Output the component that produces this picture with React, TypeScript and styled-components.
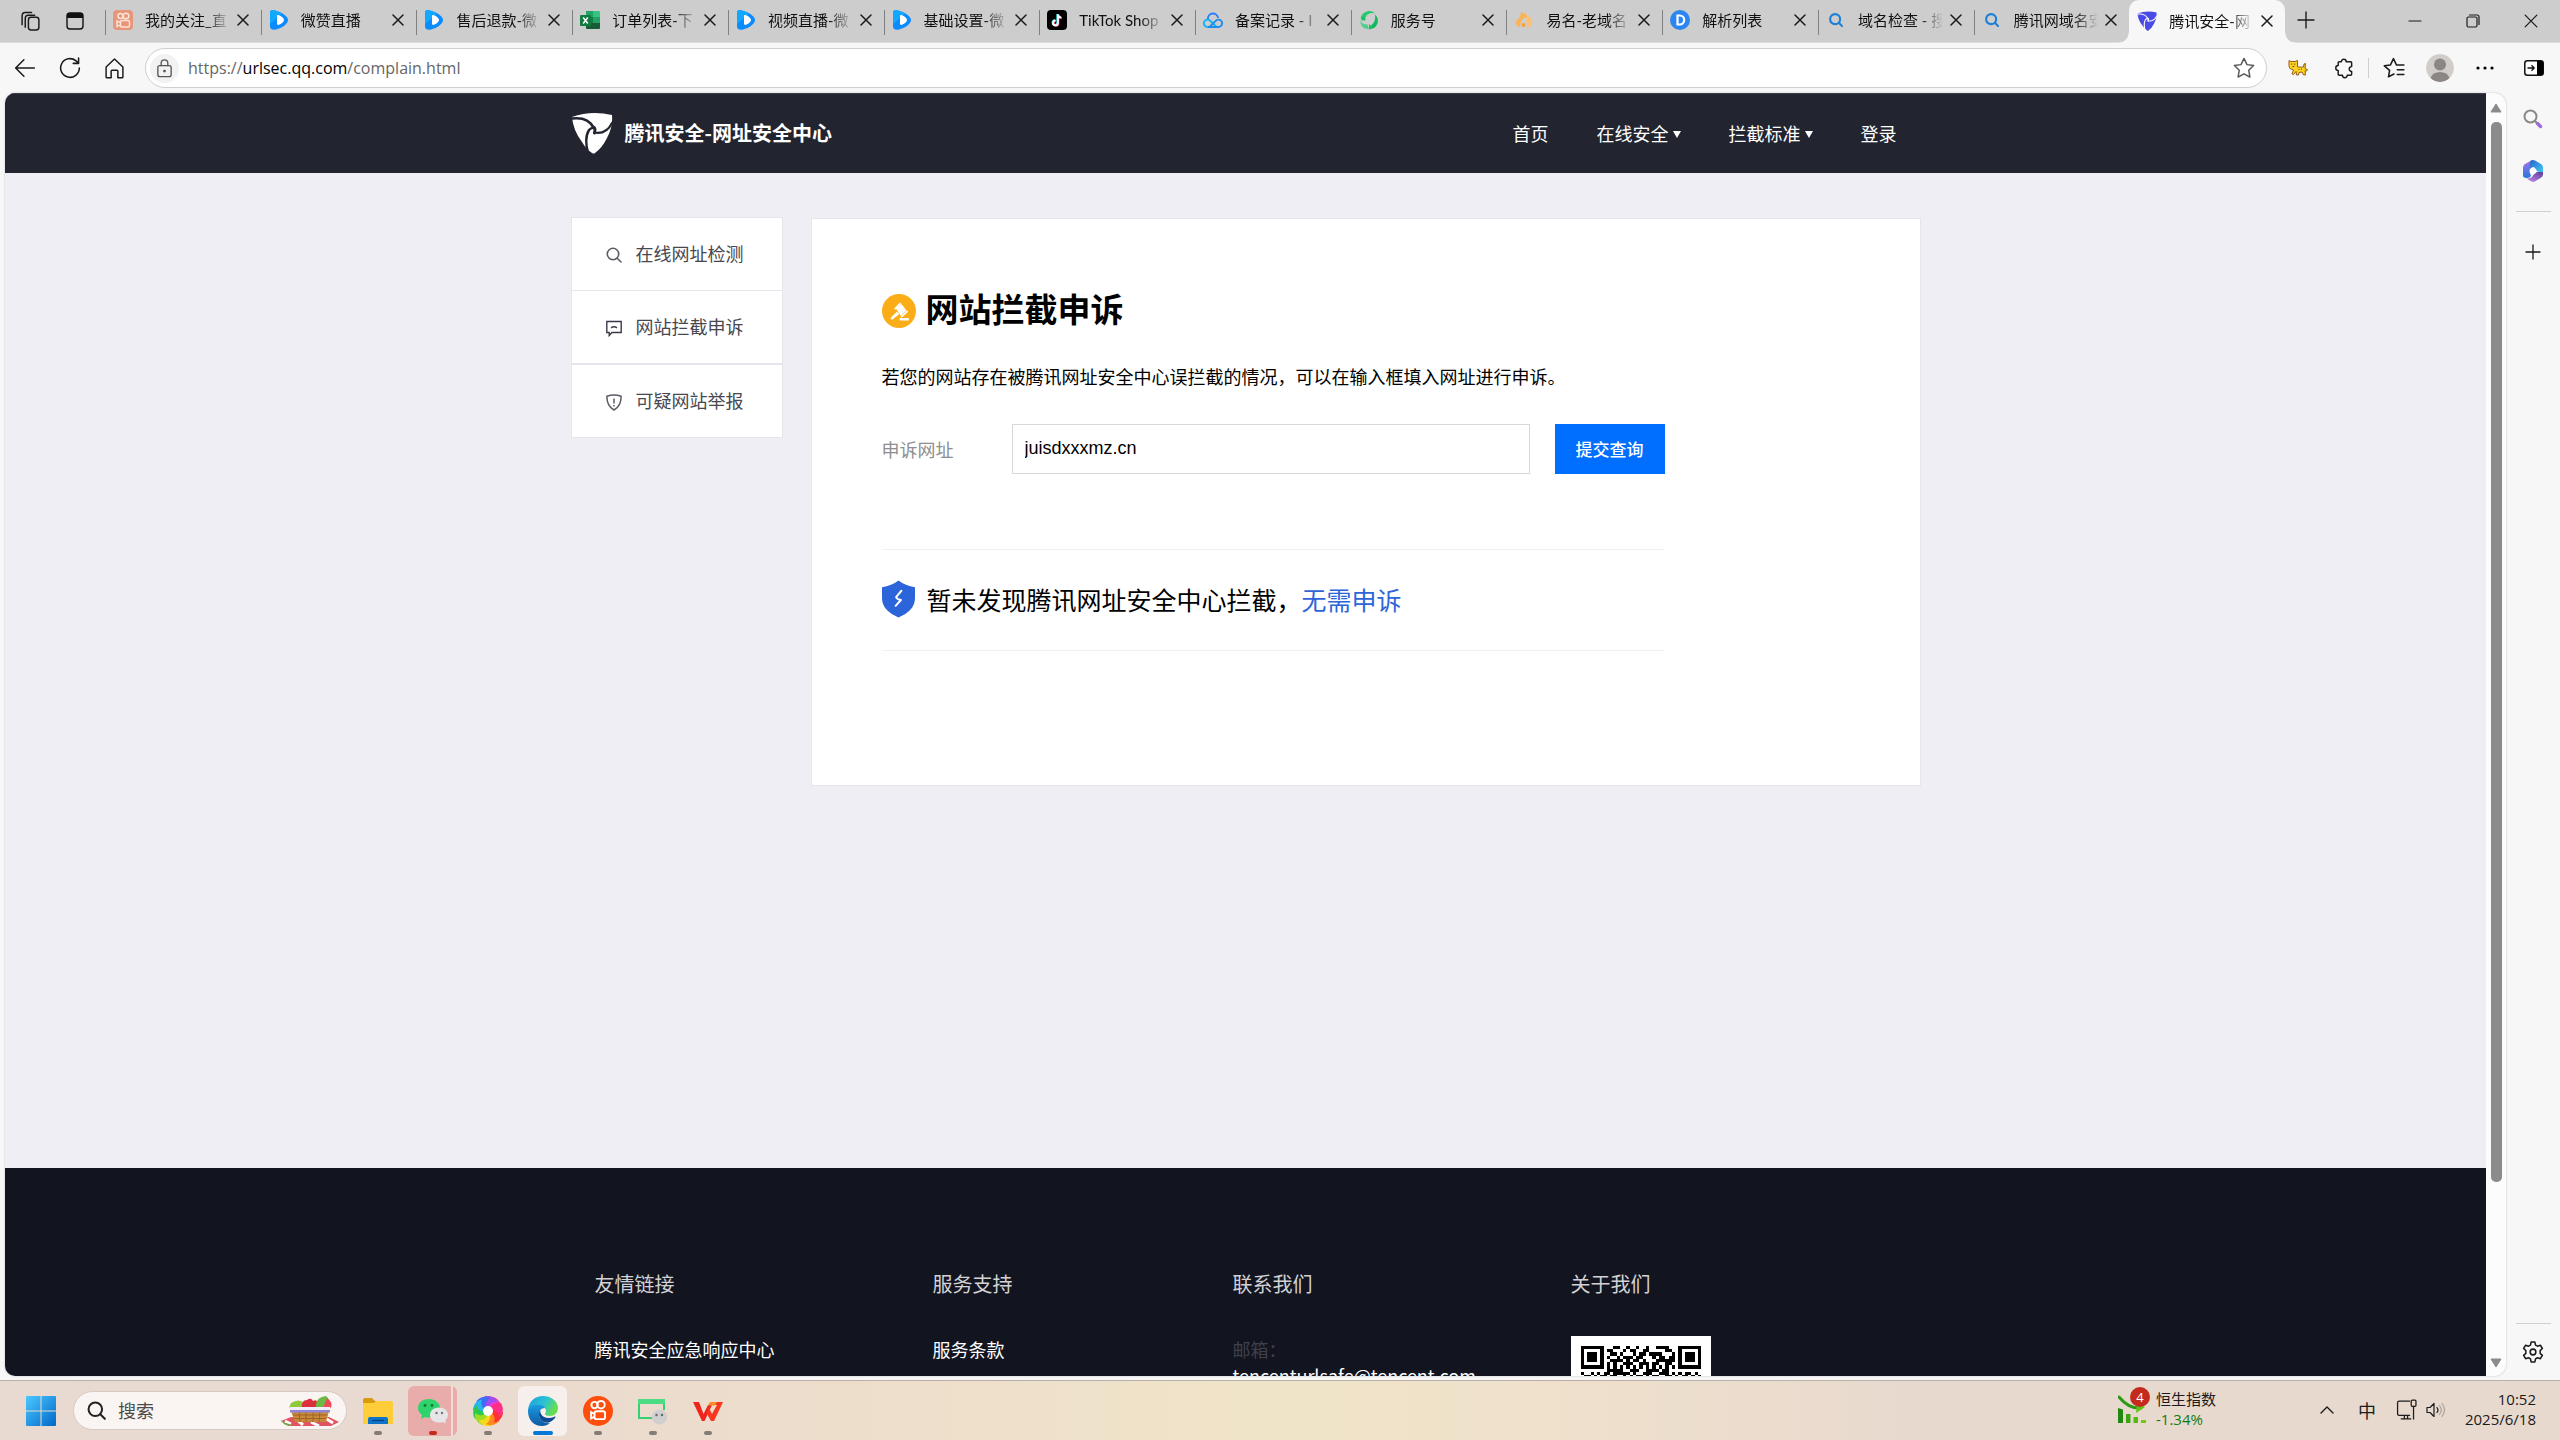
import React from 'react';
import styled, { createGlobalStyle } from 'styled-components';

const UI = '"Open Sans", "Noto Sans CJK SC", sans-serif';
const WEB = '"Noto Sans CJK SC", "Noto Sans", sans-serif';

const Global = createGlobalStyle`
  * { box-sizing: border-box; }
  html, body, #root { height: 100%; }
  body { margin: 0; background: #f7f7f7; font-family: ${UI}; color: #1b1b1b; overflow: hidden; }
  button, input { font: inherit; color: inherit; }
  button { border: 0; padding: 0; background: none; display: grid; place-items: center; cursor: pointer; }
  a { color: inherit; text-decoration: none; }
  svg { display: block; flex: none; }
  h1, h2, p, ul { margin: 0; padding: 0; font-weight: inherit; font-size: inherit; }
  ul { list-style: none; }
`;

const Screen = styled.div`
  height: 100vh;
  display: flex;
  flex-direction: column;
`;

/* ---------- tab strip ---------- */

const TabStrip = styled.div`
  display: flex;
  height: 43px;
  flex: none;
  background: #cdcdcd;
  border-bottom: 1px solid #dedede;
`;

const StripTools = styled.div`
  display: flex;
  align-items: center;
  width: 105px;
  padding-left: 20px;
  gap: 24px;
  flex: none;
`;

const Tabs = styled.div`
  display: flex;
  flex: 1;
  min-width: 0;
`;

const Tab = styled.div<{ $active?: boolean }>`
  position: relative;
  flex: 1 1 0;
  min-width: 0;
  height: ${(p) => (p.$active ? 43 : 42)}px;
  display: flex;
  align-items: center;
  padding: 0 8px 2px;
  border-radius: ${(p) => (p.$active ? '10px 10px 0 0' : '0')};
  background: ${(p) =>
    p.$active ? '#f7f7f7' : 'linear-gradient(#808080, #808080) 0 60% / 1px 25px no-repeat'};

  &::before,
  &::after {
    content: '';
    display: ${(p) => (p.$active ? 'block' : 'none')};
    position: absolute;
    bottom: 0;
    width: 10px;
    height: 10px;
  }
  &::before {
    right: 100%;
    background: radial-gradient(circle at 0 0, transparent 9px, #f7f7f7 10px);
  }
  &::after {
    left: 100%;
    background: radial-gradient(circle at 100% 0, transparent 9px, #f7f7f7 10px);
  }
`;

const IconSlot = styled.span`
  display: grid;
  place-items: center;
  width: 20px;
  flex: none;
`;

const TabTitle = styled.button`
  flex: 1;
  min-width: 0;
  display: block;
  margin: 0 3px 0 12px;
  overflow: hidden;
  white-space: nowrap;
  text-align: left;
  font-family: Lato, "Noto Sans CJK SC", sans-serif;
  font-size: 15px;
  line-height: 24px;
  color: #111;
  mask-image: linear-gradient(90deg, #000 calc(100% - 24px), transparent);
`;

const TabClose = styled.button`
  width: 20px;
  height: 20px;
`;

const StripEnd = styled.div`
  display: flex;
  width: 275px;
  flex: none;
  justify-content: space-between;
`;

const StripButton = styled.button`
  width: 42px;
  height: 40px;
`;

const WindowControls = styled.div`
  display: flex;
`;

const WindowButton = styled.button`
  width: 58px;
  height: 42px;
`;

/* ---------- toolbar ---------- */

const Toolbar = styled.div`
  display: flex;
  align-items: center;
  height: 50px;
  flex: none;
  padding-left: 2px;
  background: #f7f7f7;
`;

const ToolButton = styled.button<{ $w?: number }>`
  width: ${(p) => p.$w ?? 45}px;
  height: 40px;
  flex: none;
`;

const Address = styled.label`
  display: flex;
  align-items: center;
  flex: 1;
  height: 40px;
  margin: 0 8px;
  padding: 0 11px 0 4px;
  gap: 9px;
  border: 1px solid #cfcfcf;
  border-radius: 20px;
  background: #fff;
`;

const SiteInfo = styled.button`
  width: 29px;
  height: 29px;
  border-radius: 50%;
  background: #f2f2f2;
`;

const Url = styled.span`
  flex: 1;
  font-size: 16px;
  line-height: 24px;
  color: #666;
  b { font-weight: 400; color: #000; }
`;

const ToolDivider = styled.span`
  width: 1px;
  height: 20px;
  background: #cfcfcf;
`;

const Avatar = styled.button`
  width: 28px;
  height: 28px;
  flex: none;
  margin: 0 8px 0 7px;
  border-radius: 50%;
  overflow: hidden;
`;

/* ---------- browser body ---------- */

const Body = styled.div`
  display: flex;
  flex: 1;
  min-height: 0;
  padding: 0 0 4px 5px;
`;

const Frame = styled.div`
  display: flex;
  flex: 1;
  min-width: 0;
  border-radius: 10px 12px 12px 10px;
  overflow: hidden;
  background: #fcfcfc;
  box-shadow: 0 0 2px #bbb;
`;

const Page = styled.div`
  display: flex;
  flex-direction: column;
  flex: 1;
  min-width: 0;
  overflow: hidden;
  background: #efeef4;
  font-family: ${WEB};
`;

const ScrollTrack = styled.div`
  display: flex;
  flex-direction: column;
  align-items: center;
  width: 20px;
  padding: 10px 0 8px;
  gap: 9px;
  flex: none;
`;

const ScrollArea = styled.div`
  display: flex;
  flex-direction: column;
  flex: 1;
  width: 11px;
`;

const ScrollThumb = styled.div`
  flex: 19;
  border-radius: 5px;
  background: #8b8b8b;
`;

const ScrollRest = styled.div`
  flex: 3;
`;

const EdgeRail = styled.nav`
  display: flex;
  flex-direction: column;
  align-items: center;
  width: 54px;
  flex: none;
`;

const RailButton = styled.button<{ $h?: number }>`
  width: 44px;
  height: ${(p) => p.$h ?? 52}px;
`;

const RailLine = styled.span<{ $bottom?: boolean }>`
  width: 35px;
  height: 1px;
  background: #cfcfcf;
  margin-top: ${(p) => (p.$bottom ? 'auto' : '14px')};
  margin-bottom: ${(p) => (p.$bottom ? '4px' : '14px')};
`;

/* ---------- web page ---------- */

const Wrap = styled.div`
  width: 100%;
  max-width: 1350px;
  margin: 0 auto;
  display: flex;
`;

const SiteHeader = styled.header`
  display: flex;
  height: 80px;
  flex: none;
  padding-bottom: 2px;
  background: #222430;
  color: #fff;
  border-top: 1px solid #3d3f49;
  ${Wrap} { align-items: center; justify-content: space-between; }
`;

const Brand = styled.a`
  display: flex;
  align-items: center;
  gap: 12px;
  font-size: 20px;
  line-height: 28px;
  font-weight: 700;
`;

const SiteNav = styled.nav`
  display: flex;
  gap: 48px;
  padding-right: 24px;
  font-size: 18px;
  line-height: 26px;
`;

const NavLink = styled.a`
  display: flex;
  align-items: center;
  gap: 4px;
  svg { margin-top: 4px; }
`;

const Main = styled.main`
  flex: 1 0 auto;
  padding-top: 44px;
  ${Wrap} { align-items: flex-start; gap: 28px; }
`;

const SideMenu = styled.ul`
  width: 212px;
  flex: none;
  border: 1px solid #e5e5eb;
  background: #fff;
  li + li { border-top: 1px solid #e5e5eb; }
  li:last-child { border-top-width: 2px; }
`;

const SideLink = styled.a`
  display: flex;
  align-items: center;
  height: 72px;
  padding: 2px 0 0 34px;
  gap: 14px;
  font-size: 18px;
  line-height: 26px;
  color: #474750;
  span { padding-bottom: 4px; }
`;

const Card = styled.section`
  flex: 1;
  min-height: 568px;
  margin-top: 1px;
  padding: 68px 70px;
  border: 1px solid #e5e5eb;
  background: #fff;
  color: #000;
`;

const Title = styled.h1`
  display: flex;
  align-items: center;
  gap: 10px;
  font-size: 33px;
  line-height: 42px;
  font-weight: 700;
  span { padding-bottom: 6px; }
`;

const Lead = styled.p`
  margin-top: 28px;
  font-size: 18px;
  line-height: 26px;
  white-space: nowrap;
`;

const Form = styled.form`
  display: flex;
  align-items: center;
  margin-top: 35px;
`;

const FormLabel = styled.label`
  width: 130px;
  font-size: 18px;
  line-height: 26px;
  color: #8e8e8e;
`;

const TextBox = styled.input`
  width: 518px;
  height: 50px;
  padding: 0 12px 2px;
  border: 1px solid #d7d7dc;
  background: #fff;
  font-family: "Liberation Sans", Arial, sans-serif;
  font-size: 18px;
  color: #000;
`;

const Submit = styled.button`
  width: 110px;
  height: 50px;
  margin-left: 25px;
  padding-bottom: 2px;
  background: #006eff;
  color: #fff;
  font-size: 17px;
  font-weight: 500;
`;

const Result = styled.div`
  display: flex;
  align-items: center;
  gap: 12px;
  width: 782px;
  height: 102px;
  margin-top: 75px;
  padding-bottom: 3px;
  border: solid #f1f1f3;
  border-width: 1px 0;
  font-size: 25px;
  line-height: 36px;
  a { color: #2d64d8; }
`;

const SiteFooter = styled.footer`
  height: 208px;
  flex: none;
  padding-top: 101px;
  overflow: hidden;
  background: #121420;
  color: #fff;
  ${Wrap} { padding-left: 24px; }
`;

const FooterColumn = styled.section<{ $w: number }>`
  width: ${(p) => p.$w}px;
  font-size: 18px;
  line-height: 26px;
`;

const FooterTitle = styled.h2`
  margin-bottom: 37px;
  font-size: 20px;
  line-height: 30px;
  color: #d2d2d4;
`;

const FooterLabel = styled.p`
  color: #3e404a;
`;

/* ---------- taskbar ---------- */

const Taskbar = styled.footer`
  display: flex;
  align-items: center;
  justify-content: space-between;
  height: 60px;
  flex: none;
  padding: 0 24px 0 13px;
  border-top: 1px solid #b9b0aa;
  background: linear-gradient(90deg, #e8dad0 0%, #e8d9d2 12%, #ecdccd 27%, #f0e4c8 50%, #efe1cb 60%, #e8d9cf 75%, #e8d9cf 100%);
`;

const TaskGroup = styled.div`
  display: flex;
  align-items: center;
`;

const StartButton = styled.button`
  width: 56px;
  height: 50px;
`;

const SearchPill = styled.label`
  display: flex;
  align-items: center;
  width: 274px;
  height: 39px;
  margin: 0 3px 0 4px;
  padding: 0 7px 0 13px;
  gap: 12px;
  border: 1px solid #d5cac4;
  border-radius: 20px;
  background: #faf5f2;
  font-size: 18px;
`;

const SearchBox = styled.input`
  flex: 1;
  min-width: 0;
  padding: 0;
  border: 0;
  outline: 0;
  background: none;
  &::placeholder { color: #4d4a48; opacity: 1; }
`;

type TaskState = 'plain' | 'alert' | 'active';

const taskFill: Record<TaskState, string> = {
  plain: 'transparent',
  alert: 'linear-gradient(90deg, #e8adaa 43px, #f5dcd8 43px 45px, #e8adaa 45px)',
  active: '#f6efeb',
};

const TaskApp = styled.button<{ $state: TaskState }>`
  position: relative;
  width: 49px;
  height: 50px;
  margin: 0 3px;
  border-radius: 6px;
  background: ${(p) => taskFill[p.$state]};
  &::after {
    content: '';
    position: absolute;
    left: 50%;
    bottom: 1px;
    width: ${(p) => (p.$state === 'active' ? 20 : 8)}px;
    height: 4px;
    border-radius: 2px;
    transform: translateX(-50%);
    background: ${(p) =>
      p.$state === 'active' ? '#0078d4' : p.$state === 'alert' ? '#c42b1c' : '#847c77'};
  }
`;

const Widget = styled.button`
  display: flex;
  align-items: center;
  gap: 10px;
  margin-right: 92px;
  padding-bottom: 3px;
  text-align: left;
  font-size: 15px;
  line-height: 20px;
`;

const WidgetIcon = styled.span`
  position: relative;
`;

const Badge = styled.span`
  position: absolute;
  top: -8px;
  right: -4px;
  width: 20px;
  height: 20px;
  border-radius: 50%;
  background: #c42b1c;
  color: #fff;
  font-size: 13px;
  line-height: 20px;
  text-align: center;
`;

const Change = styled.span`
  display: block;
  color: #107c10;
`;

const TrayButton = styled.button<{ $w: number }>`
  width: ${(p) => p.$w}px;
  height: 40px;
  padding-bottom: 2px;
  font-size: 18px;
`;

const Clock = styled.button`
  display: block;
  width: 88px;
  padding-bottom: 3px;
  text-align: right;
  font-size: 15px;
  line-height: 20px;
`;

/* ---------- icons ---------- */

const Line = ({ s = 20, w = 1.4, c = '#1b1b1b', vb = 20, children }: any) => (
  <svg width={s} height={s} viewBox={`0 0 ${vb} ${vb}`} fill="none" stroke={c} strokeWidth={w} strokeLinecap="round" strokeLinejoin="round">
    {children}
  </svg>
);

const Cross = ({ s = 12, w = 1.5 }: { s?: number; w?: number }) => (
  <Line s={s} vb={12} w={w}><path d="M1 1l10 10M11 1L1 11" /></Line>
);

const Magnifier = ({ c = '#5b5b66', s = 16, w = 1.6 }: any) => (
  <Line s={s} vb={16} c={c} w={w}><circle cx="7" cy="7" r="5.7" /><path d="M11.2 11.2L15 15" /></Line>
);

const PlayMark = () => (
  <svg width="20" height="20" viewBox="0 0 20 20">
    <path d="M1 3c0-2.600 2-3.500 5-2.500C12 2 19 6 19 10s-6 8-12 9.500C3.500 20.500 1 19 1 16.500z" fill="#0a8cff" />
    <path d="M1 3c0-2.600 2-3.500 5-2.500C9 1.500 11 2.500 13 4L1 14z" fill="#12a8ff" />
    <path d="M8 6c0-1 1-1.300 2-.8 3 1.300 5 3 5 4.800s-2 3.500-5 4.800c-1 .4-2 0-2-1z" fill="#fff" />
  </svg>
);

const KwaiGlyph = () => (
  <g fill="none" stroke="#fff" strokeWidth="1.3">
    <circle cx="7.700" cy="6" r="2.100" /><circle cx="12" cy="5.800" r="2.500" />
    <rect x="7.700" y="10.200" width="7" height="5.200" rx="1.300" /><path d="M7.700 12L5.400 10.800v4.200l2.300-1.200" />
  </g>
);

const KwaiTab = () => (
  <svg width="20" height="20" viewBox="0 0 20 20">
    <rect width="20" height="20" rx="4" fill="#e8967a" />
    <g fill="none" stroke="#fbe4da" strokeWidth="1.400">
      <circle cx="7.500" cy="6" r="2.500" /><circle cx="13" cy="6" r="2.800" />
      <rect x="7.500" y="10.500" width="9" height="6.500" rx="1.500" /><path d="M7.500 12.500L4 11v5.500l3.500-1.500" />
    </g>
  </svg>
);

const ExcelMark = () => (
  <svg width="20" height="20" viewBox="0 0 20 20">
    <path d="M6 1h7v6H6z" fill="#21a366" /><path d="M13 1h6q1 0 1 1v5h-7z" fill="#33c481" />
    <path d="M6 7h7v6H6z" fill="#107c41" /><path d="M13 7h7v6h-7z" fill="#21a366" />
    <path d="M6 13h14v5q0 1-1 1H7q-1 0-1-1z" fill="#185c37" />
    <rect y="5" width="11" height="11" rx="1" fill="#107c41" />
    <path d="M3.200 7.500l4.600 6M7.800 7.500l-4.600 6" stroke="#fff" strokeWidth="1.500" />
  </svg>
);

const TikTokMark = () => (
  <svg width="20" height="20" viewBox="0 0 20 20">
    <rect width="20" height="20" rx="4" fill="#000" />
    <g fill="none" strokeWidth="1.900">
      <path d="M10.300 4v8.500a2.400 2.400 0 1 1-2.400-2.400M10.300 4c.2 2 1.500 3 3.400 3.200" stroke="#25f4ee" />
      <path d="M11.500 4.800v8.500a2.400 2.400 0 1 1-2.400-2.400M11.500 4.800c.2 2 1.500 3 3.400 3.200" stroke="#fe2c55" />
      <path d="M10.900 4.400v8.500a2.400 2.400 0 1 1-2.400-2.400M10.900 4.400c.2 2 1.500 3 3.400 3.200" stroke="#fff" />
    </g>
  </svg>
);

const CloudMark = () => (
  <svg width="20" height="20" viewBox="0 0 20 20" fill="none" strokeWidth="1.900">
    <path d="M5 9a5 5 0 0 1 10-1" stroke="#2a7bff" />
    <path d="M4.500 17a3.700 3.700 0 1 1 2.500-6.500l6.500 6.500" stroke="#12b6f5" />
    <path d="M4.500 17h11a3.700 3.700 0 1 0-2.800-6.200L6.500 17" stroke="#1f8cf0" />
  </svg>
);

const ServiceMark = () => (
  <svg width="20" height="20" viewBox="0 0 20 20">
    <path d="M10 1q4-.3 6 2.500-5-1.500-8.500 2Q6 8 5.500 11L1.500 8Q3 2 10 1z" fill="#27c96f" />
    <path d="M1 10q1.500 4.500 7.500 4.500l1.500 4.500Q2 19.500 1 10z" fill="#4fd08a" />
    <path d="M16 4.500q4 4 2.500 9-2 5-7 5.500l1-4q4.500-3 3.500-10.500z" fill="#12b85c" />
    <path d="M10 14l3.500 3-3.500 3zM4 6l3 4-5 .5z" fill="#1dbf66" />
  </svg>
);

const YimingMark = () => (
  <svg width="20" height="20" viewBox="0 0 20 20">
    <path d="M7 2c4 1 7 3 7 6-2-1-4-1-6 2-1 2-2 4-2 7-4-1-6-4-3-7 2-2 4-4 4-8z" fill="#f9b45a" />
    <path d="M13 6c4 1 6 4 5 7s-4 5-6 5c2-3 2-5 0-7z" fill="#fcc272" />
    <circle cx="9.500" cy="15" r="2" fill="#f5a031" />
  </svg>
);

const DnsMark = () => (
  <svg width="20" height="20" viewBox="0 0 20 20">
    <circle cx="10" cy="10" r="10" fill="#2a86f0" />
    <path d="M7.500 5.500h2.200a4.500 4.500 0 0 1 0 9H7.500z" fill="none" stroke="#fff" strokeWidth="2.200" />
  </svg>
);

const GuardMark = ({ s, color, gap }: { s: number; color: string; gap: string }) => (
  <svg width={s} height={s} viewBox="0 0 42 42">
    <path d="M1 5Q20-2 41 3q1 12-5 23-5 10-12 15-1 1-3 0-6-4-10-11Q2 18 1 5z" fill={color} />
    <g fill="none" stroke={gap} strokeLinecap="round">
      <path d="M1 6.500q16-2 21.500 9" strokeWidth="2.400" />
      <path d="M41 11q-6 12-18 9.500" strokeWidth="2.200" />
      <path d="M17 41q-4-15 1-23 2-2.500 5-2" strokeWidth="2.400" />
      <path d="M22 15q3 1 1.500 6" strokeWidth="3" />
    </g>
  </svg>
);

const ShieldOk = () => (
  <svg width="33" height="38" viewBox="0 0 34 38">
    <path d="M17 0q7 5.500 17 7v11q0 13-17 20Q0 31 0 18V7q10-1.500 17-7z" fill="#2b65d9" />
    <path d="M20 10.500l-5.500 6.500q1 2.500 5 3l-5.500 6" fill="none" stroke="#fff" strokeWidth="2" strokeLinejoin="round" strokeLinecap="round" />
  </svg>
);

const GavelMark = () => (
  <svg width="34" height="34" viewBox="0 0 34 34">
    <circle cx="17" cy="17" r="17" fill="#fbad18" />
    <g fill="#fff">
      <path d="M14 14.500l5.500-4.500 5 6.500-6 5z" />
      <path d="M12 14.500l6-6 1.300 1.300-6 6zM18.500 22l6.500-5.500 1.200 1.300-6.400 5.700z" />
      <path d="M15 17.500l2.300 2.500-6.800 5.500q-2 .5-2-1.500z" />
      <rect x="17.500" y="24" width="9.500" height="2.500" rx="1" />
    </g>
  </svg>
);

const CommentIcon = () => (
  <svg width="16" height="17" viewBox="0 0 16 17" fill="none" stroke="#3a3a48" strokeWidth="1.400">
    <path d="M.8 1.500h14.400v11H6L3.200 15.500v-3H.8z" /><path d="M5 7.800q3-2 6 0" />
  </svg>
);

const ShieldAlert = () => (
  <svg width="16" height="17" viewBox="0 0 16 17" fill="none" stroke="#5b5b66" strokeWidth="1.500">
    <path d="M.9 2.200Q8-.2 15.100 2.200 15.300 12 8 16 .7 12 .9 2.200z" /><path d="M8 4.500v5M8 11v1.600" />
  </svg>
);

const Caret = () => (
  <svg width="8" height="7" viewBox="0 0 8 7"><path d="M0 0h8L4 7z" fill="#fff" /></svg>
);

const qrRows = [
  '1111111000110010010010011110001111111',
  '1000001011000101100110000011001000001',
  '1011101001101000101101111000101011101',
  '1011101010010111011000101101101011101',
  '1011101001111010110100011111101011101',
  '1000001010100111001110110011001000001',
  '1111111010101010101010101010101111111',
  '0000000011111001110011110110000000000',
  '1001010110111110100111001110101011010',
  '0110101101100101011010110011010110101',
];

const QrCode = () => (
  <svg width="140" height="140" viewBox="-3 -3 43 43" shapeRendering="crispEdges">
    <rect x="-3" y="-3" width="43" height="43" fill="#fff" />
    {qrRows.map((row, y) =>
      row.split('').map((bit, x) => (bit === '1' ? <rect key={`${x}-${y}`} x={x} y={y} width="1" height="1" fill="#000" /> : null)),
    )}
  </svg>
);

const CatIcon = () => (
  <svg width="20" height="18" viewBox="0 0 20 18">
    <path d="M1 1.500L3 2.500h4L9.500 1.500V8h6l.5-3 1.500-.5L17 9.500l2.500 1-.8 1.500-1.700-.3.500 4.300h-2l-1.500-3-3 .5-.5 2.500H8.500L8 12.500 5.500 15.500 4 15l1.500-4L2 9.500 1 7z" fill="#fbd31c" stroke="#9a5c1c" strokeWidth="1" strokeLinejoin="round" />
    <path d="M3.800 4.500v1.300M6.800 4.500v1.300M4.500 7.500h1.800M11 10v1M13.500 9.500v1" stroke="#7a3d10" strokeWidth="1" />
  </svg>
);

const M365 = () => (
  <svg width="20" height="22" viewBox="0 0 20 22">
    <defs>
      <linearGradient id="mLeft" x1="0" y1="0" x2="0" y2="1"><stop offset="0" stopColor="#b070e8" /><stop offset="1" stopColor="#1f7ae0" /></linearGradient>
      <linearGradient id="mTop" x1="0" y1="0" x2="1" y2="1"><stop offset="0" stopColor="#2a62c8" /><stop offset="1" stopColor="#3fd0f8" /></linearGradient>
      <linearGradient id="mLow" x1="0" y1="1" x2="1" y2="0"><stop offset="0" stopColor="#c98cf2" /><stop offset="1" stopColor="#5a3c98" /></linearGradient>
    </defs>
    <path d="M9 0L2 4Q0 5 0 7.500v8Q0 18 4 18q3 0 4-2l-1.500-5L9 6z" fill="url(#mLeft)" />
    <path d="M8 .5Q10-.5 12 .6L18 4q2 1.200 2 3.500V14l-6-3-3-4-4 1q-1-5 1-7.500z" fill="url(#mTop)" />
    <path d="M20 12v2.500q0 2-2 3.200l-6 3.600q-2 1-4 0l-5-3q5 1 7-3l3.500-3.300z" fill="url(#mLow)" />
    <path d="M10 7.500l3.200 1.700v3.600L10 14.500l-3.200-1.700V9.200z" fill="#fff" />
  </svg>
);

const Basket = () => (
  <svg width="58" height="30" viewBox="0 0 58 30">
    <path d="M0 25l10-4h38l10 5-8 4H8z" fill="#e05562" />
    <path d="M4 25l6 3M14 22l8 7M30 26l8 4M44 22l8 5" stroke="#fff" strokeWidth="3" />
    <path d="M0 24q4 4 10 4l-2 2Q2 29 0 24z" fill="#6fae3c" />
    <path d="M10 7q8-5 13 0v5H8z" fill="#8fc93a" /><path d="M21 12q-1-8 5-8 4-3 6 1 5-3 6 7z" fill="#dc2f3c" />
    <path d="M35 12q-1-11 10-12 5 4 4 12z" fill="#6dbb45" /><path d="M42 12l4-10q6 4 4 10z" fill="#ee4a57" />
    <path d="M10 15h38l-3 11H14z" fill="#c8893b" />
    <path d="M12 19h34M13 22.500h32M18 15l1 11M25 15v11M32 15v11M39 15l-1 11" stroke="#9f6424" strokeWidth="1" />
    <rect x="8" y="11" width="42" height="3.500" rx="1.500" fill="#f1edfb" /><rect x="9" y="14" width="40" height="2.500" fill="#8f86d8" />
  </svg>
);

const WindowsLogo = () => (
  <svg width="30" height="30" viewBox="0 0 30 30">
    <defs>
      <linearGradient id="win" x1="0" y1="0" x2="1" y2="1"><stop offset="0" stopColor="#4cc9ff" /><stop offset="1" stopColor="#0067c8" /></linearGradient>
    </defs>
    <path d="M1 0h13.500v14.500H0V1q0-1 1-1zM15.500 0H29q1 0 1 1v13.500H15.500zM0 15.500h14.500V30H1q-1 0-1-1zM15.500 15.500H30V29q0 1-1 1H15.500z" fill="url(#win)" />
  </svg>
);

const Folder = () => (
  <svg width="30" height="30" viewBox="0 0 30 30">
    <path d="M0 4q0-2 2-2h7l3 3h16v5H0z" fill="#d99a0b" />
    <path d="M0 7h11l2-2h15q2 0 2 2v21H0z" fill="#ffcd3a" />
    <path d="M5 28v-5q0-2 2-2h16q2 0 2 2v5z" fill="#0f73c9" /><path d="M9 24.500h12" stroke="#073f7a" strokeWidth="1.200" />
  </svg>
);

const WeChat = () => (
  <svg width="30" height="30" viewBox="0 0 30 30">
    <path d="M11 3C4 3 0 7 0 12q0 4 4 7l-1 4 4-2q3 1 6 0c6-1 9-4 9-9S17 3 11 3z" fill="#2fd36b" />
    <circle cx="7" cy="9.500" r="1.400" fill="#14763a" /><circle cx="14" cy="9.500" r="1.400" fill="#14763a" />
    <path d="M21 11.500c-5 0-9 3-9 7.500s4 7.500 9 7.500q2 0 4-.6l3 1.600-.7-3Q30 22 30 19c0-4.500-4-7.500-9-7.500z" fill="#e6e6e8" />
    <circle cx="18.500" cy="17" r="1.200" fill="#777" /><circle cx="24" cy="17" r="1.200" fill="#777" />
  </svg>
);

const wheel = ['#e83fd0', '#a04cf0', '#3f6cf5', '#27b7ee', '#2bc94b', '#9fdc24', '#f6d91c', '#ff8a1c', '#ff3038', '#ff2f86'];

const ColorWheel = () => (
  <svg width="30" height="30" viewBox="-15 -15 30 30">
    {wheel.map((c, i) => (
      <path key={c} d="M0-4Q0-12 6-14 14-10 13-2 8-6 3-3z" fill={c} transform={`rotate(${-i * 36})`} />
    ))}
    <circle r="5" fill="#fff" />
  </svg>
);

const EdgeLogo = () => (
  <svg width="30" height="30" viewBox="0 0 30 30">
    <defs>
      <linearGradient id="edgeTop" x1="0" y1="0" x2="1" y2=".4"><stop offset="0" stopColor="#1c9fe0" /><stop offset=".6" stopColor="#2cc3d2" /><stop offset="1" stopColor="#68de4f" /></linearGradient>
      <linearGradient id="edgeLow" x1="0" y1="0" x2="0" y2="1"><stop offset="0" stopColor="#1a9be0" /><stop offset="1" stopColor="#0c59a4" /></linearGradient>
    </defs>
    <path d="M0 14C1 5 7 0 15 0c9 0 15 6 15 12 0 5-4 8-8 8-3 0-5-1-5-2s1-1 1-3c0-3-3-5-7-5C5 10 1 13 0 17z" fill="url(#edgeTop)" />
    <path d="M0 15C1 10 6 8 11 9c3 0 5 1 6 3-4 0-6 3-6 6 0 6 5 10 11 9-2 2-5 3-8 3C6 30 0 24 0 15z" fill="url(#edgeLow)" />
    <path d="M12 14c-2 4-1 8 2 11 4 3 9 2 13-3 1-1 0-2-1-1-5 2-11 1-13-3-.6-1.500-.8-3-1-4z" fill="#0d4c94" />
  </svg>
);

const KwaiTask = () => (
  <svg width="30" height="30" viewBox="0 0 20 20"><circle cx="10" cy="10" r="10" fill="#ff4d0c" /><KwaiGlyph /></svg>
);

const WeChatWindow = () => (
  <svg width="30" height="30" viewBox="0 0 30 30">
    <path d="M14 22H1V4h25v10" fill="none" stroke="#35d071" strokeWidth="2" /><path d="M0 3h27v5H0z" fill="#4bdc84" />
    <circle cx="21.500" cy="21" r="7.500" fill="#cfcfcf" /><circle cx="18.500" cy="19" r="1.200" fill="#666" /><circle cx="24" cy="19" r="1.200" fill="#666" />
  </svg>
);

const Wps = () => (
  <svg width="30" height="30" viewBox="0 0 30 30">
    <path d="M0 6h6l4.500 12L15 9h4l-7.500 16H9z" fill="#f0241c" />
    <path d="M15.500 11l3.500 7 5-9h-8l2-3h12l-9 19h-3l-4-7z" fill="#f8371c" />
    <path d="M17 6h7l-2 3.500h-7z" fill="#fb8a2c" />
  </svg>
);

const StockIcon = () => (
  <svg width="28" height="28" viewBox="0 0 28 28">
    <path d="M1 2q10 12 22 11" fill="none" stroke="#2c9a17" strokeWidth="3" strokeLinecap="round" />
    <path d="M18 18l9-6-8-3" fill="#5fc40f" /><path d="M0 13l5 1.500V28H0z" fill="#23880f" />
    <path d="M8 19h4.500v9H8z" fill="#3ca50f" /><path d="M15.500 22H20v6h-4.500z" fill="#58b80f" /><path d="M23 25h5v3h-5z" fill="#6fcb0f" />
  </svg>
);

/* ---------- data ---------- */

const tabs: { title: string; icon: React.ReactNode; active?: boolean }[] = [
  { title: '我的关注_直', icon: <KwaiTab /> },
  { title: '微赞直播', icon: <PlayMark /> },
  { title: '售后退款-微', icon: <PlayMark /> },
  { title: '订单列表-下', icon: <ExcelMark /> },
  { title: '视频直播-微', icon: <PlayMark /> },
  { title: '基础设置-微', icon: <PlayMark /> },
  { title: 'TikTok Shop', icon: <TikTokMark /> },
  { title: '备案记录 - I', icon: <CloudMark /> },
  { title: '服务号', icon: <ServiceMark /> },
  { title: '易名-老域名', icon: <YimingMark /> },
  { title: '解析列表', icon: <DnsMark /> },
  { title: '域名检查 - 搜', icon: <Magnifier c="#1a7fd6" s={14} w={2.4} /> },
  { title: '腾讯网域名安', icon: <Magnifier c="#1a7fd6" s={14} w={2.4} /> },
  { title: '腾讯安全-网', icon: <GuardMark s={20} color="#4a4be6" gap="#f7f7f7" />, active: true },
];

const apps: { name: string; icon: React.ReactNode; state: TaskState }[] = [
  { name: '文件资源管理器', icon: <Folder />, state: 'plain' },
  { name: '微信', icon: <WeChat />, state: 'alert' },
  { name: '浏览器', icon: <ColorWheel />, state: 'plain' },
  { name: 'Edge', icon: <EdgeLogo />, state: 'active' },
  { name: '快手', icon: <KwaiTask />, state: 'plain' },
  { name: '企业微信', icon: <WeChatWindow />, state: 'plain' },
  { name: 'WPS', icon: <Wps />, state: 'plain' },
];

export default function App() {
  return (
    <Screen>
      <Global />
      <TabStrip>
        <StripTools>
          <button aria-label="工作区">
            <Line s={21}><rect x="8" y="6" width="10" height="12" rx="2.500" /><path d="M5 15.500V7q0-3 3-3h6M2 13V5q0-3.500 3-3.500h6" /></Line>
          </button>
          <button aria-label="标签页操作">
            <svg width="20" height="20" viewBox="0 0 20 20"><rect x="2" y="2" width="16" height="16" rx="3" fill="none" stroke="#111" strokeWidth="1.400" /><path d="M2 7V4.500Q2 2 4.500 2h11Q18 2 18 4.500V7z" fill="#111" /></svg>
          </button>
        </StripTools>
        <Tabs>
          {tabs.map((t, i) => (
            <Tab key={i} $active={t.active}>
              <IconSlot>{t.icon}</IconSlot>
              <TabTitle>{t.title}</TabTitle>
              <TabClose aria-label="关闭标签页"><Cross s={12} /></TabClose>
            </Tab>
          ))}
        </Tabs>
        <StripEnd>
          <StripButton aria-label="新建标签页"><Line s={18} vb={18}><path d="M9 1v16M1 9h16" /></Line></StripButton>
          <WindowControls>
            <WindowButton aria-label="最小化"><Line s={14} vb={14} w={1.2}><path d="M1 7h12" /></Line></WindowButton>
            <WindowButton aria-label="还原"><Line s={14} vb={14} w={1.2}><rect x="1" y="3" width="10" height="10" rx="1.500" /><path d="M3.500 1H11q2 0 2 2v7.500" /></Line></WindowButton>
            <WindowButton aria-label="关闭"><Cross s={14} w={1.1} /></WindowButton>
          </WindowControls>
        </StripEnd>
      </TabStrip>

      <Toolbar>
        <ToolButton aria-label="后退"><Line s={22}><path d="M18.500 10H1.500M9 2.500L1.500 10 9 17.500" /></Line></ToolButton>
        <ToolButton aria-label="刷新"><Line s={22}><path d="M18.500 10A8.500 8.500 0 1 1 15.500 3.500L17.500 5.500M17.800 1v4.800H13" /></Line></ToolButton>
        <ToolButton aria-label="主页"><Line s={21}><path d="M2 8.500L10 1l8 7.500V18q0 .8-.8.8h-4V12.500q0-.8-.8-.8H7.600q-.8 0-.8.8v6.300h-4Q2 18.800 2 18z" /></Line></ToolButton>
        <Address>
          <SiteInfo aria-label="网站信息"><Line s={19} c="#555"><rect x="3" y="7" width="14" height="11.500" rx="2" /><path d="M6.500 7V4.500Q6.500 1 10 1t3.500 3.500V7" /><circle cx="10" cy="12.700" r=".8" /></Line></SiteInfo>
          <Url>https://<b>urlsec.qq.com</b>/complain.html</Url>
          <button aria-label="收藏"><Line s={22} c="#555" w={1.3}><path d="M10 1.300l2.700 5.600 6 .8-4.400 4.300 1.100 6.200L10 15.300l-5.400 2.900L5.700 12 1.300 7.700l6-.8z" /></Line></button>
        </Address>
        <ToolButton $w={45} aria-label="扩展程序"><CatIcon /></ToolButton>
        <ToolButton $w={48} aria-label="扩展"><Line s={21}><path d="M7 3.500a2.300 2.300 0 0 1 4.600 0h4.200q1 0 1 1v3.700a2.300 2.300 0 0 0 0 4.600v2.700q0 1-1 1h-3.200a2.300 2.300 0 0 1-4.600 0H5q-1 0-1-1v-3.700a2.300 2.300 0 0 1 0-4.600V4.500q0-1 1-1z" /></Line></ToolButton>
        <ToolDivider />
        <ToolButton $w={50} aria-label="收藏夹"><Line s={22}><path d="M10 15.500L5 18l1-5.800L1.200 8l5.600-.8L9.500 1.500l2.700 5.700H19M13 11.500h6M13 16h6" /></Line></ToolButton>
        <Avatar aria-label="个人资料">
          <svg width="28" height="28" viewBox="0 0 28 28"><circle cx="14" cy="14" r="14" fill="#d1cdc9" /><circle cx="14" cy="10.500" r="6" fill="#8c8784" /><path d="M4.500 24q2-6 9.500-6t9.500 6q-4 4-9.500 4t-9.500-4z" fill="#8c8784" /></svg>
        </Avatar>
        <ToolButton aria-label="设置及其他"><svg width="18" height="4" viewBox="0 0 18 4"><circle cx="2" cy="2" r="1.600" /><circle cx="9" cy="2" r="1.600" /><circle cx="16" cy="2" r="1.600" /></svg></ToolButton>
        <ToolButton $w={53} aria-label="边栏">
          <svg width="20" height="16" viewBox="0 0 20 16"><rect x=".8" y=".8" width="18.400" height="14.400" rx="2.500" fill="#fff" stroke="#111" strokeWidth="1.500" /><path d="M13 1h4q2.500 0 2.500 2.500v9Q19.500 15 17 15h-4z" /><path d="M3.500 8H10M7.500 5.300L10.200 8l-2.700 2.700" fill="none" stroke="#111" strokeWidth="1.300" /></svg>
        </ToolButton>
      </Toolbar>

      <Body>
        <Frame>
          <Page>
            <SiteHeader>
              <Wrap>
                <Brand href="#"><GuardMark s={42} color="#fff" gap="#222430" />腾讯安全-网址安全中心</Brand>
                <SiteNav>
                  <NavLink href="#">首页</NavLink>
                  <NavLink href="#">在线安全<Caret /></NavLink>
                  <NavLink href="#">拦截标准<Caret /></NavLink>
                  <NavLink href="#">登录</NavLink>
                </SiteNav>
              </Wrap>
            </SiteHeader>
            <Main>
              <Wrap>
                <SideMenu>
                  <li><SideLink href="#"><Magnifier /><span>在线网址检测</span></SideLink></li>
                  <li><SideLink href="#"><CommentIcon /><span>网站拦截申诉</span></SideLink></li>
                  <li><SideLink href="#"><ShieldAlert /><span>可疑网站举报</span></SideLink></li>
                </SideMenu>
                <Card>
                  <Title><GavelMark /><span>网站拦截申诉</span></Title>
                  <Lead>若您的网站存在被腾讯网址安全中心误拦截的情况，可以在输入框填入网址进行申诉。</Lead>
                  <Form onSubmit={(e) => e.preventDefault()}>
                    <FormLabel htmlFor="site">申诉网址</FormLabel>
                    <TextBox id="site" defaultValue="juisdxxxmz.cn" />
                    <Submit type="submit">提交查询</Submit>
                  </Form>
                  <Result>
                    <ShieldOk />
                    <p>暂未发现腾讯网址安全中心拦截，<a href="#">无需申诉</a></p>
                  </Result>
                </Card>
              </Wrap>
            </Main>
            <SiteFooter>
              <Wrap>
                <FooterColumn $w={338}><FooterTitle>友情链接</FooterTitle><a href="#">腾讯安全应急响应中心</a></FooterColumn>
                <FooterColumn $w={300}><FooterTitle>服务支持</FooterTitle><a href="#">服务条款</a></FooterColumn>
                <FooterColumn $w={338}><FooterTitle>联系我们</FooterTitle><FooterLabel>邮箱：</FooterLabel><a href="#">tencenturlsafe@tencent.com</a></FooterColumn>
                <FooterColumn $w={140}><FooterTitle>关于我们</FooterTitle><QrCode /></FooterColumn>
              </Wrap>
            </SiteFooter>
          </Page>
          <ScrollTrack>
            <svg width="12" height="10" viewBox="0 0 12 10"><path d="M6 1l5 8H1z" fill="#8b8b8b" stroke="#8b8b8b" strokeLinejoin="round" /></svg>
            <ScrollArea><ScrollThumb /><ScrollRest /></ScrollArea>
            <svg width="12" height="10" viewBox="0 0 12 10"><path d="M6 9L1 1h10z" fill="#8b8b8b" stroke="#8b8b8b" strokeLinejoin="round" /></svg>
          </ScrollTrack>
        </Frame>
        <EdgeRail>
          <RailButton aria-label="搜索"><svg width="20" height="20" viewBox="0 0 20 20" fill="none" strokeLinecap="round"><circle cx="7.500" cy="7.500" r="6" stroke="#888" strokeWidth="2" /><path d="M14.500 14.500l3 3" stroke="#a06be0" strokeWidth="3.500" /><path d="M12 12l1.500 1.500" stroke="#888" strokeWidth="2" /></svg></RailButton>
          <RailButton aria-label="Microsoft 365"><M365 /></RailButton>
          <RailLine />
          <RailButton aria-label="自定义"><Line s={16} vb={16} w={1.3}><path d="M8 1v14M1 8h14" /></Line></RailButton>
          <RailLine $bottom />
          <RailButton $h={48} aria-label="设置">
            <Line s={22}><circle cx="10" cy="10" r="2.600" /><path d="M8.300 1h3.400l.6 2.700 1.800 1 2.600-.9 1.800 3-2 1.900v2.500l2 1.900-1.800 3-2.600-.9-1.800 1-.6 2.800H8.300l-.6-2.800-1.800-1-2.600.9-1.800-3 2-1.900V8.700l-2-1.900 1.800-3 2.600.9 1.800-1z" /></Line>
          </RailButton>
        </EdgeRail>
      </Body>

      <Taskbar>
        <TaskGroup>
          <StartButton aria-label="开始"><WindowsLogo /></StartButton>
          <SearchPill><Magnifier c="#222" s={19} w={1.7} /><SearchBox aria-label="搜索" placeholder="搜索" /><Basket /></SearchPill>
          {apps.map((a) => (
            <TaskApp key={a.name} $state={a.state} aria-label={a.name}>{a.icon}</TaskApp>
          ))}
        </TaskGroup>
        <TaskGroup>
          <Widget>
            <WidgetIcon><StockIcon /><Badge>4</Badge></WidgetIcon>
            <span>恒生指数<Change>-1.34%</Change></span>
          </Widget>
          <TrayButton $w={38} aria-label="显示隐藏的图标"><Line s={14} vb={14}><path d="M1 10l6-6 6 6" /></Line></TrayButton>
          <TrayButton $w={42}>中</TrayButton>
          <TrayButton $w={36} aria-label="网络"><Line s={21} w={1.2}><path d="M13 2H3Q1.500 2 1.500 3.500v10.500Q1.500 15.500 3 15.500H13M5 19h9M8 16v3M11 16v3" /><rect x="14.500" y="1" width="4.500" height="6" rx="1" /><path d="M16.700 7v12" /></Line></TrayButton>
          <TrayButton $w={24} aria-label="音量"><Line s={20} w={1.2}><path d="M1 7.500h3l4-4v13l-4-4H1z" /><path d="M11 7.500q2 2.500 0 5" /><path d="M13.500 5.500q3.500 4.500 0 9M16 3.500q5 6.500 0 13" stroke="#aaa29c" /></Line></TrayButton>
          <Clock>10:52<br />2025/6/18</Clock>
        </TaskGroup>
      </Taskbar>
    </Screen>
  );
}
